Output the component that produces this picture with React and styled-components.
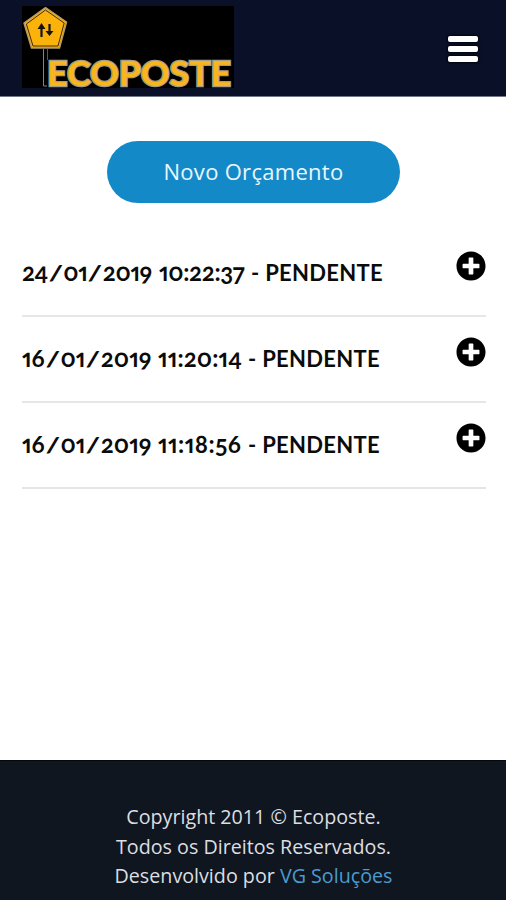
import { Fragment } from "react";
import styled, { createGlobalStyle } from "styled-components";
import { FaPlusCircle } from "react-icons/fa";

const GlobalStyle = createGlobalStyle`
    * {
        box-sizing: border-box;
    }

    body {
        margin: 0;
        background: #fff;
        font-family: "Open Sans", "Noto Sans", sans-serif;
    }
`;

const Page = styled.div`
    display: flex;
    flex-direction: column;
    height: 900px;
    overflow: hidden;
`;

const Header = styled.header`
    display: flex;
    align-items: center;
    justify-content: space-between;
    flex: none;
    height: 97px;
    padding: 0 28px 2px 22px;
    background: #0a1028;
    border-bottom: 1px solid #74778a;
`;

const LogoImage = styled.svg`
    display: block;
    width: 212px;
    height: 82px;
    background: #000;
    overflow: visible;
`;

const LogoText = styled.text`
    font-family: "Lato", sans-serif;
    font-size: 34px;
    font-weight: 700;
    fill: #f9b51c;
    stroke: #a59c86;
    stroke-width: 2.6px;
    paint-order: stroke;
`;

const MenuButton = styled.button`
    display: flex;
    flex-direction: column;
    gap: 4px;
    padding: 0;
    margin-top: 3px;
    border: 0;
    background: none;
`;

const MenuBar = styled.span`
    width: 30px;
    height: 6px;
    border-radius: 2px;
    background: #fff;
    box-shadow: 0 0 2px 1px #02040f;
`;

const Main = styled.main`
    display: flex;
    flex-direction: column;
    flex: 1;
    padding: 44px 20px 0 22px;
`;

const NewButton = styled.button`
    align-self: center;
    width: 293px;
    height: 62px;
    padding: 0 0 2px 1px;
    margin: 0 2px 28px 0;
    border: 0;
    border-radius: 31px;
    background: #1489c8;
    color: #e9f7fd;
    font-family: inherit;
    font-size: 22px;
    letter-spacing: 0.3px;
`;

const Row = styled.div`
    display: flex;
    align-items: flex-start;
    justify-content: space-between;
    height: 86px;
    padding-top: 20px;
    border-bottom: 2px solid #e6e6e6;
`;

const Title = styled.h4`
    display: flex;
    align-items: baseline;
    margin: 7px 0 0;
    font-family: "Lato", sans-serif;
    font-size: 22px;
    font-weight: 700;
    line-height: 28px;
    color: #0b0b0b;
    white-space: pre;
    font-variant-numeric: oldstyle-nums proportional-nums;
`;

const DateText = styled.span`
    width: ${({ $width }) => $width}px;
    font-size: 24px;
    letter-spacing: ${({ $spacing }) => $spacing}px;
`;

const Slash = styled.span`
    display: inline-block;
    width: 15.5px;
    font-size: 21px;
    text-align: center;
    letter-spacing: 0;
    transform: scaleX(1.5);
`;

const Time = styled.span`
    width: ${({ $width }) => $width}px;
    font-size: 24px;
    letter-spacing: ${({ $spacing }) => $spacing}px;
`;

const Status = styled.span`
    letter-spacing: 0.3px;
`;

const PlusIcon = styled(FaPlusCircle)`
    width: 30px;
    height: 30px;
    color: #000;
`;

const Footer = styled.footer`
    flex: none;
    height: 140px;
    padding: 41px 0 0 1px;
    border-top: 1px solid #05080e;
    background: #101620;
    color: #dcdee0;
    font-size: 19.7px;
    line-height: 29.5px;
    text-align: center;
`;

const Line = styled.div`
    white-space: nowrap;
`;

const Link = styled.a`
    color: #4a9bd0;
`;

const budgets = [
    { date: "24/01/2019", time: "10:22:37", status: "PENDENTE", dateWidth: 137, timeWidth: 92, dateSpacing: -0.4, timeSpacing: -0.35 },
    { date: "16/01/2019", time: "11:20:14", status: "PENDENTE", dateWidth: 136, timeWidth: 90, dateSpacing: 0, timeSpacing: 0.1 },
    { date: "16/01/2019", time: "11:18:56", status: "PENDENTE", dateWidth: 136, timeWidth: 90, dateSpacing: 0, timeSpacing: 0.45 },
];

function Logo() {
    return (
        <LogoImage viewBox="0 0 212 82" role="img" aria-label="Ecoposte">
            <path d="M21.5 43V80H25" fill="none" stroke="#8d8574" strokeWidth="1" />
            <path d="M25.5 43V54" stroke="#5d574b" strokeWidth="1" />
            <path
                d="M23.5 1.5L44.5 16L37.5 42H9.5L2 17Z"
                fill="#fbb30b"
                stroke="#b39a68"
                strokeWidth="1.5"
                strokeLinejoin="round"
            />
            <path
                d="M23.5 4L42.2 17L36 40H11L4.4 18Z"
                fill="none"
                stroke="#3c2c08"
                strokeWidth="1"
                strokeLinejoin="round"
            />
            <path
                d="M19.5 31V22M27.5 18V27"
                stroke="#17140b"
                strokeWidth="2.2"
            />
            <path d="M19.5 17L15.5 23H23.5ZM27.5 30L23.5 25H31.5Z" fill="#17140b" />
            <LogoText x="25" y="80" textLength="184" lengthAdjust="spacingAndGlyphs">
                ECOPOSTE
            </LogoText>
        </LogoImage>
    );
}

function Stamp({ item }) {
    return (
        <>
            <DateText $width={item.dateWidth} $spacing={item.dateSpacing}>
                {item.date.split("/").map((part, i) => (
                    <Fragment key={i}>
                        {i > 0 && <Slash>/</Slash>}
                        {part}
                    </Fragment>
                ))}
            </DateText>
            <Time $width={item.timeWidth} $spacing={item.timeSpacing}>{item.time}</Time>
        </>
    );
}

export default function App() {
    return (
        <>
            <GlobalStyle />
            <Page>
                <Header>
                    <Logo />
                    <MenuButton aria-label="Menu">
                        <MenuBar />
                        <MenuBar />
                        <MenuBar />
                    </MenuButton>
                </Header>
                <Main>
                    <NewButton>Novo Orçamento</NewButton>
                    {budgets.map((item) => (
                        <Row key={item.time}>
                            <Title>
                                <Stamp item={item} />
                                <Status>- {item.status}</Status>
                            </Title>
                            <PlusIcon />
                        </Row>
                    ))}
                </Main>
                <Footer>
                    <Line>Copyright 2011 © Ecoposte.</Line>
                    <Line>Todos os Direitos Reservados.</Line>
                    <Line>Desenvolvido por <Link>VG Soluções</Link></Line>
                </Footer>
            </Page>
        </>
    );
}
